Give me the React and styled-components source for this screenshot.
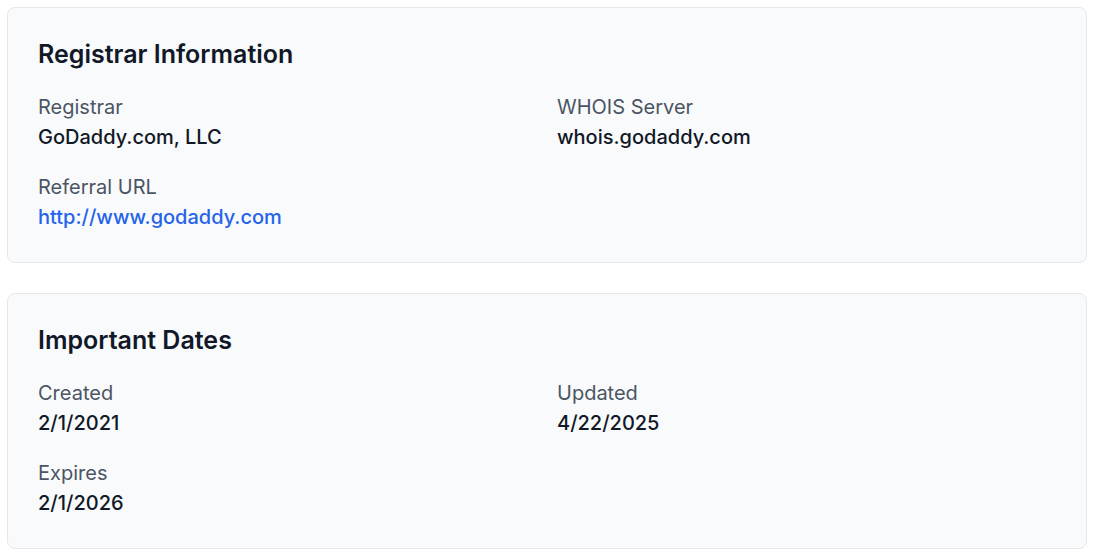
import React from "react";
import styled, { createGlobalStyle } from "styled-components";

const GlobalStyle = createGlobalStyle`
  * { box-sizing: border-box; }
  body {
    margin: 0;
    background: #ffffff;
    font-family: "Inter", "Liberation Sans", sans-serif;
    color: #111827;
  }
`;

const sections = [
  {
    id: 1,
    title: "Registrar Information",
    fields: [
      { label: "Registrar", value: "GoDaddy.com, LLC" },
      { label: "WHOIS Server", value: "whois.godaddy.com" },
      { label: "Referral URL", value: "http://www.godaddy.com", link: true },
    ],
  },
  {
    id: 2,
    title: "Important Dates",
    fields: [
      { label: "Created", value: "2/1/2021" },
      { label: "Updated", value: "4/22/2025" },
      { label: "Expires", value: "2/1/2026" },
    ],
  },
];

const App = () => {
  return (
    <>
      <GlobalStyle />
      <Page>
        {sections.map((section) => (
          <Card key={section.id}>
            <Title>{section.title}</Title>
            <Grid>
              {section.fields.map((f) => (
                <Field key={f.label}>
                  <Label>{f.label}</Label>
                  {f.link ? (
                    <Link href={f.value}>{f.value}</Link>
                  ) : (
                    <Value>{f.value}</Value>
                  )}
                </Field>
              ))}
            </Grid>
          </Card>
        ))}
      </Page>
    </>
  );
};

const Page = styled.div`
  width: 1094px;
  padding: 7px 7px;
  display: flex;
  flex-direction: column;
  gap: 30px;
`;

const Card = styled.section`
  width: 1080px;
  background-color: #f9fafb;
  border: 1px solid #e5e7eb;
  border-radius: 8px;
  padding: 30px;
`;

const Title = styled.h2`
  margin: 0 0 22px;
  font-size: 25px;
  line-height: 32px;
  font-weight: 600;
  color: #111827;
`;

const Grid = styled.div`
  display: grid;
  grid-template-columns: 1fr 1fr;
  column-gap: 20px;
  row-gap: 20px;
`;

const Field = styled.div`
  display: flex;
  flex-direction: column;
`;

const Label = styled.span`
  font-size: 20px;
  line-height: 30px;
  font-weight: 400;
  color: #4b5563;
`;

const Value = styled.span`
  font-size: 20px;
  line-height: 30px;
  font-weight: 500;
  color: #111827;
`;

const Link = styled.a`
  font-size: 20px;
  line-height: 30px;
  font-weight: 500;
  color: #2563eb;
  text-decoration: none;
  align-self: flex-start;
`;

export default App;
